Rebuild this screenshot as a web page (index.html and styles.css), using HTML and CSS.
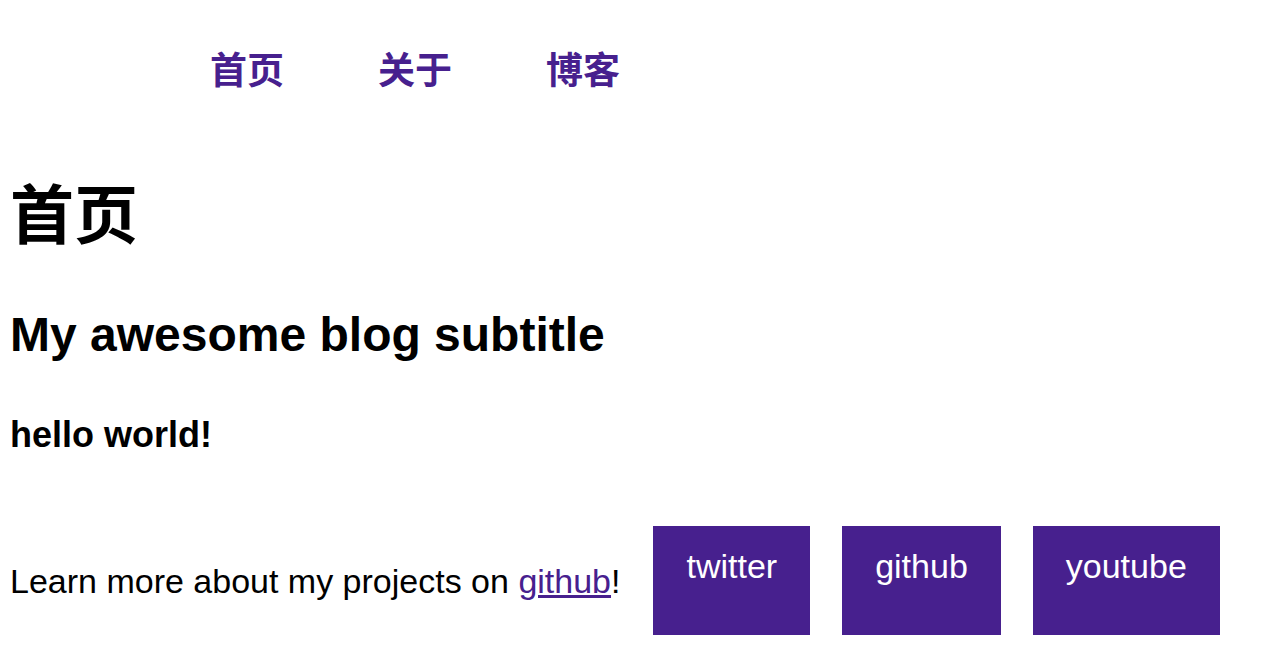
FILE: index.html
```html
<!DOCTYPE html>
<html lang="zh">
<head>
<meta charset="utf-8">
<title>首页</title>
<link rel="stylesheet" href="styles.css">
</head>
<body>
<nav class="nav">
  <a class="nav-link" href="#">首页</a>
  <a class="nav-link" href="#">关于</a>
  <a class="nav-link" href="#">博客</a>
</nav>
<main class="main">
  <h1 class="title">首页</h1>
  <h2 class="subtitle">My awesome blog subtitle</h2>
  <h3 class="hello">hello world!</h3>
  <div class="footer-row">
    <p class="learn">Learn more about my projects on <a class="inline-link" href="#">github</a>!</p>
    <div class="socials">
      <a class="social" href="#">twitter</a>
      <a class="social" href="#">github</a>
      <a class="social" href="#">youtube</a>
    </div>
  </div>
</main>
</body>
</html>
```
FILE: styles.css
```css
* { box-sizing: border-box; }
html, body { margin: 0; padding: 0; background: #fff; }
body {
  font-family: "Liberation Sans", "Noto Sans CJK SC", sans-serif;
  color: #000;
  padding-left: 10px;
}
.nav {
  display: flex;
  gap: 94px;
  padding: 44px 0 0 200px;
}
.nav-link {
  font-family: "Noto Sans CJK SC", sans-serif;
  font-size: 37px;
  font-weight: 700;
  line-height: 48px;
  color: #47208e;
  text-decoration: none;
}
.title {
  font-family: "Noto Sans CJK SC", sans-serif;
  font-size: 64px;
  font-weight: 700;
  line-height: 80px;
  margin: 78px 0 0;
}
.subtitle {
  font-size: 48px;
  font-weight: 700;
  line-height: 56px;
  margin: 57px 0 0;
}
.hello {
  font-size: 36px;
  font-weight: 700;
  line-height: 44px;
  margin: 50px 0 0;
}
.footer-row {
  display: flex;
  align-items: flex-end;
  margin-top: 69px;
}
.learn {
  font-size: 34px;
  line-height: 40px;
  margin: 0 33px 34px 0;
}
.inline-link { color: #47208e; }
.socials {
  display: flex;
  gap: 32px;
}
.social {
  display: block;
  background: #47208e;
  color: #fff;
  text-decoration: none;
  font-size: 34px;
  line-height: 40px;
  padding: 20px 33px 49px;
}
.social-wide { padding-left: 31px; padding-right: 31px; }
```
